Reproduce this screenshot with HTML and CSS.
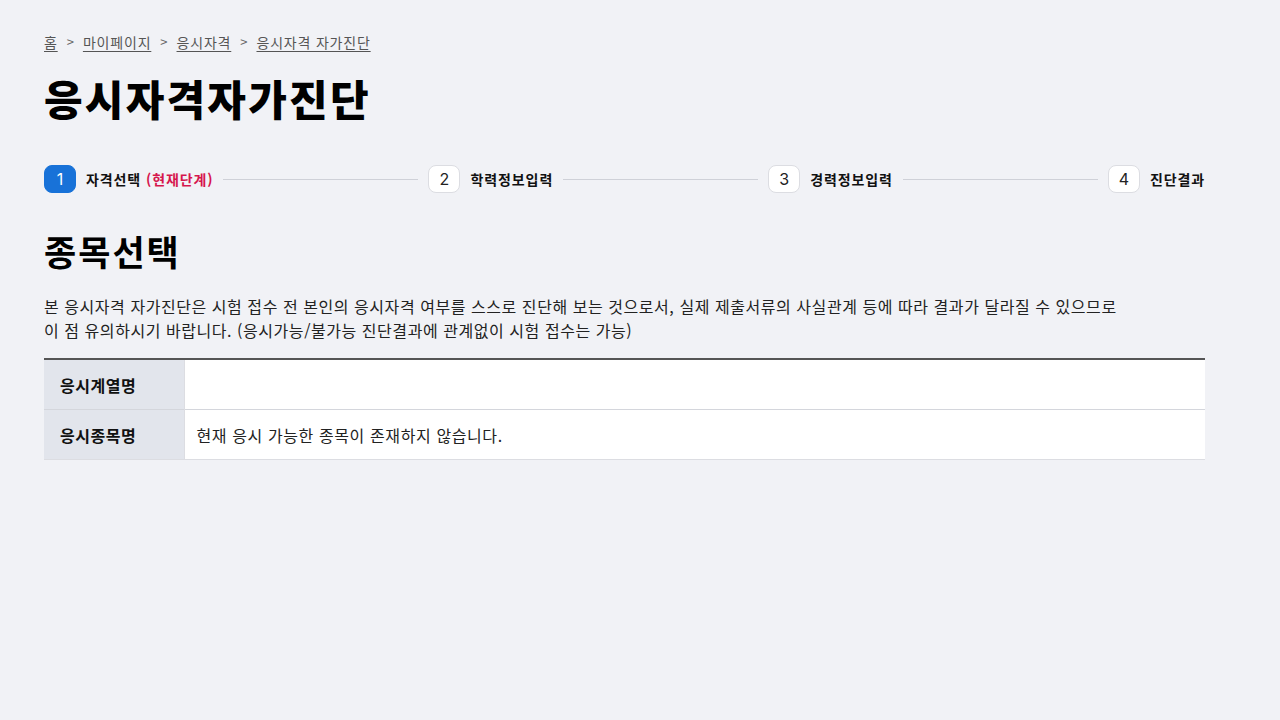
FILE: index.html
```html
<!DOCTYPE html>
<html lang="ko">
<head>
<meta charset="utf-8">
<title>응시자격자가진단</title>
<link rel="stylesheet" href="styles.css">
</head>
<body>
<div class="page">
  <nav class="breadcrumb">
    <a href="#">홈</a><span class="sep">&gt;</span>
    <a href="#">마이페이지</a><span class="sep">&gt;</span>
    <a href="#">응시자격</a><span class="sep">&gt;</span>
    <a href="#">응시자격 자가진단</a>
  </nav>
  <h1 class="title">응시자격자가진단</h1>
  <ol class="steps">
    <li class="step current"><span class="num">1</span><span class="label">자격선택 <em>(현재단계)</em></span></li>
    <li class="line"></li>
    <li class="step"><span class="num">2</span><span class="label">학력정보입력</span></li>
    <li class="line"></li>
    <li class="step"><span class="num">3</span><span class="label">경력정보입력</span></li>
    <li class="line"></li>
    <li class="step"><span class="num">4</span><span class="label">진단결과</span></li>
  </ol>
  <h2 class="section-title">종목선택</h2>
  <p class="desc">본 응시자격 자가진단은 시험 접수 전 본인의 응시자격 여부를 스스로 진단해 보는 것으로서, 실제 제출서류의 사실관계 등에 따라 결과가 달라질 수 있으므로<br>이 점 유의하시기 바랍니다. (응시가능/불가능 진단결과에 관계없이 시험 접수는 가능)</p>
  <table class="info">
    <tr><th>응시계열명</th><td></td></tr>
    <tr><th>응시종목명</th><td>현재 응시 가능한 종목이 존재하지 않습니다.</td></tr>
  </table>
</div>
</body>
</html>
```

FILE: styles.css
```css
html, body {
  margin: 0;
  padding: 0;
  background: #f1f2f6;
}
body {
  font-family: "Noto Sans CJK KR", "Noto Sans", sans-serif;
  color: #111;
}
.page {
  width: 1161px;
  margin: 0 0 0 44px;
  padding-top: 30px;
}
.breadcrumb {
  display: flex;
  align-items: center;
  font-size: 14px;
  line-height: 24px;
  color: #555;
}
.breadcrumb a {
  color: #555;
  letter-spacing: 0.8px;
  text-decoration: underline;
  text-underline-offset: 3px;
}
.breadcrumb .sep {
  margin: 0 9px;
  color: #666;
  font-size: 13px;
}
.title {
  margin: 16px 0 0;
  font-size: 42px;
  line-height: 56px;
  font-weight: 800;
  letter-spacing: 2.2px;
  color: #000;
}
.steps {
  list-style: none;
  margin: 39px 0 0;
  padding: 0;
  display: flex;
  align-items: center;
  gap: 10px;
}
.step {
  display: flex;
  align-items: center;
  gap: 10px;
}
.num {
  display: flex;
  align-items: center;
  justify-content: center;
  width: 30px;
  height: 26px;
  border: 1px solid #dcdde2;
  border-radius: 8px;
  background: #fff;
  font-family: "Inter", "Noto Sans", sans-serif;
  font-size: 16px;
  color: #222;
}
.step.current .num {
  background: #1872d8;
  border-color: #1872d8;
  color: #fff;
}
.label {
  font-size: 14px;
  font-weight: 700;
  letter-spacing: 0.9px;
  color: #111;
}
.label em {
  font-style: normal;
  color: #d6164d;
}
.line {
  flex: 1;
  height: 1px;
  background: #cfd1d8;
}
.section-title {
  margin: 34px 0 0;
  font-size: 35px;
  line-height: 48px;
  font-weight: 700;
  letter-spacing: 2px;
  color: #000;
}
.desc {
  margin: 19px 0 0;
  font-size: 16px;
  line-height: 24px;
  color: #222;
  letter-spacing: 0.55px;
}
.info {
  margin-top: 16px;
  width: 100%;
  border-collapse: collapse;
  border-top: 2px solid #555;
  border-bottom: 1px solid #dcdde2;
  background: #fff;
}
.info th {
  width: 140px;
  box-sizing: border-box;
  background: #e2e5ec;
  text-align: left;
  padding: 0 16px;
  height: 49px;
  font-size: 16px;
  font-weight: 700;
  letter-spacing: 0.5px;
  color: #111;
  border-right: 1px solid #dcdde2;
}
.info td {
  padding: 0 12px;
  height: 49px;
  font-size: 16px;
  letter-spacing: 0.6px;
  color: #222;
}
.info tr + tr th,
.info tr + tr td {
  border-top: 1px solid #d4d6dc;
}
```
